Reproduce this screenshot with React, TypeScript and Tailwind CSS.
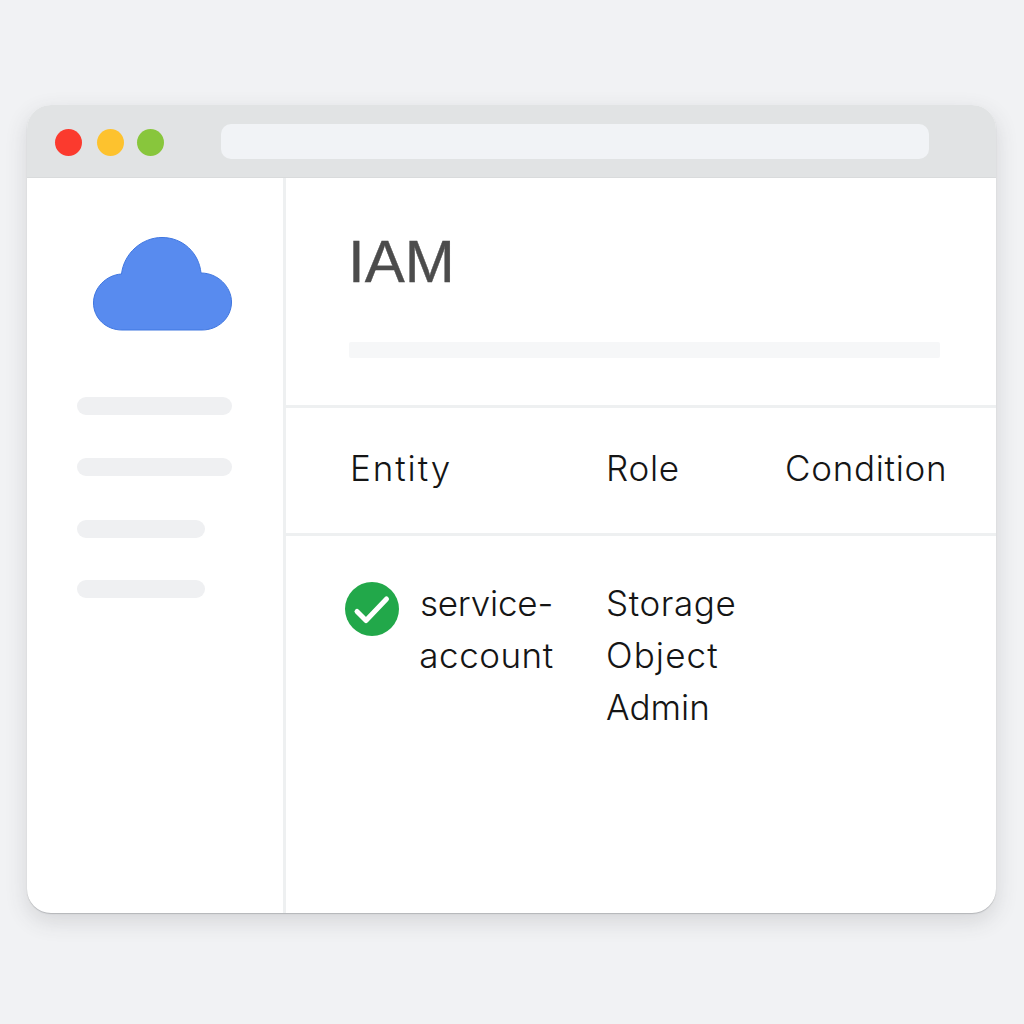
export default function App() {
  const font = { fontFamily: "Inter, 'Liberation Sans', sans-serif" };
  return (
    <div className="w-[1024px] h-[1024px] bg-[#f1f2f4] pt-[105px] pl-[27px] overflow-hidden" style={font}>
      <div className="w-[969px] h-[808px] rounded-[24px] bg-white overflow-hidden flex flex-col shadow-[0_1px_1px_rgba(60,64,67,0.25),0_8px_22px_rgba(60,64,67,0.16)]">
        <div className="h-[73px] shrink-0 bg-[#e1e3e4] border-b border-[#d9dbdc] flex items-center pl-[28px]">
          <div className="flex mt-[2px]">
            <div className="w-[27px] h-[27px] rounded-full bg-[#fb3a2e]" />
            <div className="w-[27px] h-[27px] rounded-full bg-[#fdc22e] ml-[15px]" />
            <div className="w-[27px] h-[27px] rounded-full bg-[#88c63c] ml-[13px]" />
          </div>
          <div className="ml-[57px] w-[708px] h-[35px] rounded-[10px] bg-[#f1f3f6]" />
        </div>
        <div className="flex-1 flex">
          <div className="w-[256px] shrink-0 pl-[50px] pt-[59px]">
            <svg width="140" height="95" viewBox="0 0 140 95" className="ml-[16px] block">
              <path d="M29 93C13 93 0.500 81 0.500 66C0.500 51 13 38 28.500 37C31 16 49 0.500 69 0.500C90 0.500 106 16 108 36C125 36 138.500 50 138.500 65C138.500 81 125 93 109 93Z" fill="#588bef" stroke="#3f76e0" strokeWidth="1" />
            </svg>
            <div className="mt-[65px] flex flex-col">
              <div className="w-[155px] h-[18px] rounded-full bg-[#eff0f2]" />
              <div className="mt-[43px] w-[155px] h-[18px] rounded-full bg-[#eff0f2]" />
              <div className="mt-[44px] w-[128px] h-[18px] rounded-full bg-[#eff0f2]" />
              <div className="mt-[42px] w-[128px] h-[18px] rounded-full bg-[#eff0f2]" />
            </div>
          </div>
          <div className="flex-1 border-l-[3px] border-[#eef0f1] flex flex-col">
            <div className="h-[230px] shrink-0 border-b-[3px] border-[#eef0f1] pl-[62px] pt-[49px]">
              <div className="font-['Liberation_Sans'] text-[60px] leading-[70px] text-[#4c4c4c] [-webkit-text-stroke:0.4px_#4c4c4c]">IAM</div>
              <div className="mt-[45px] ml-[1px] w-[591px] h-[16px] bg-[#f6f7f8] rounded-[2px]" />
            </div>
            <div className="h-[128px] shrink-0 border-b-[3px] border-[#eef0f1] flex items-center text-[35px] font-[350] text-[#151515] pb-[5px]">
              <div className="w-[320px] pl-[64px] tracking-[1.9px]">Entity</div>
              <div className="w-[179px] tracking-[0.7px]">Role</div>
              <div className="tracking-[0.7px]">Condition</div>
            </div>
            <div className="flex pt-[41px] text-[35px] leading-[52px] font-[350] text-[#151515]">
              <div className="w-[320px] pl-[59px] flex items-start">
                <svg width="54" height="54" viewBox="0 0 54 54" className="mt-[5px] shrink-0">
                  <circle cx="27" cy="27" r="27" fill="#22a84a" />
                  <path d="M12 29.500L21 38.500L41.500 17" fill="none" stroke="#fff" strokeWidth="5" strokeLinecap="round" strokeLinejoin="round" />
                </svg>
                <div className="ml-[20px] w-[135px] text-center">
                  <div className="tracking-[-0.2px]">service-</div>
                  <div className="tracking-[0.5px]">account</div>
                </div>
              </div>
              <div>
                <div className="tracking-[0.6px]">Storage</div>
                <div className="tracking-[1.1px]">Object</div>
                <div>Admin</div>
              </div>
            </div>
          </div>
        </div>
      </div>
    </div>
  );
}
